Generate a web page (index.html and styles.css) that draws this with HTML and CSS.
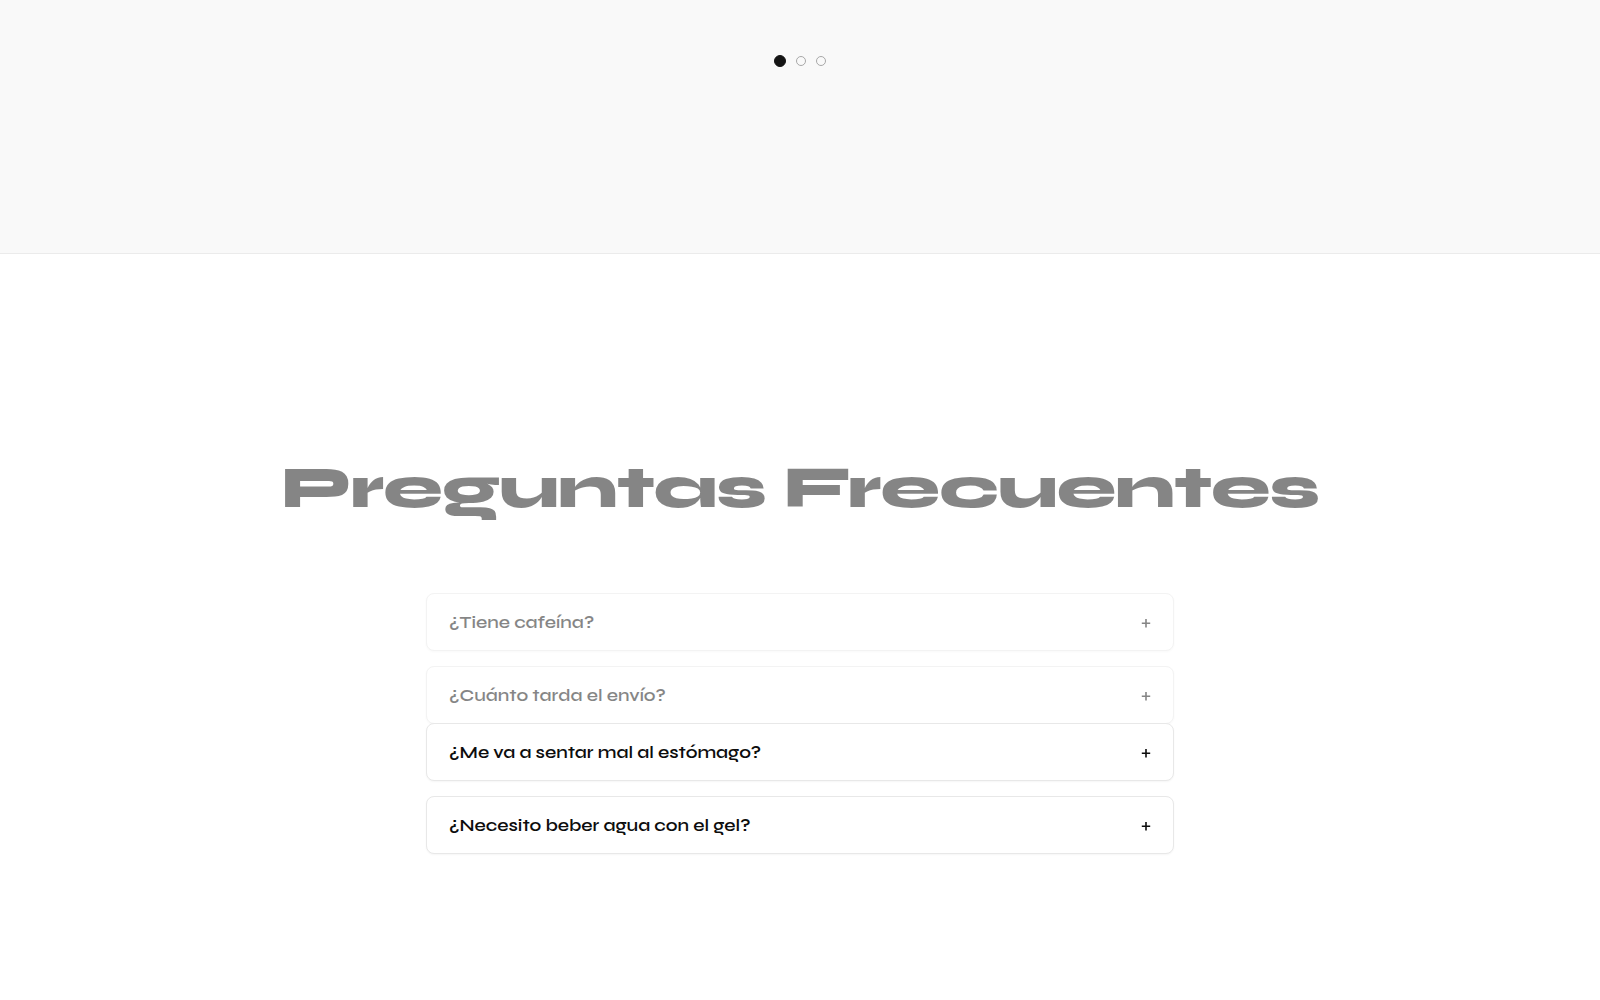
FILE: index.html
```html
<!DOCTYPE html>
<html lang="es">
<head>
<meta charset="utf-8">
<meta name="viewport" content="width=device-width, initial-scale=1">
<title>Preguntas Frecuentes</title>
<link rel="stylesheet" href="styles.css">
</head>
<body>
<section class="slider">
  <div class="dots">
    <button class="dot dot-active" type="button" aria-label="1"></button>
    <button class="dot" type="button" aria-label="2"></button>
    <button class="dot" type="button" aria-label="3"></button>
  </div>
</section>
<main class="faq">
  <h2 class="faq-title">Preguntas Frecuentes</h2>
  <div class="faq-list">
    <div class="faq-group faq-entering">
      <button class="faq-item" type="button"><span>¿Tiene cafeína?</span><svg class="plus" viewBox="0 0 10 12" aria-hidden="true"><path d="M5 3v8.5M.8 7.2h8.4"/></svg></button>
      <button class="faq-item" type="button"><span>¿Cuánto tarda el envío?</span><svg class="plus" viewBox="0 0 10 12" aria-hidden="true"><path d="M5 3v8.5M.8 7.2h8.4"/></svg></button>
    </div>
    <div class="faq-group faq-shown">
      <button class="faq-item" type="button"><span>¿Me va a sentar mal al estómago?</span><svg class="plus" viewBox="0 0 10 12" aria-hidden="true"><path d="M5 3v8.5M.8 7.2h8.4"/></svg></button>
      <button class="faq-item" type="button"><span>¿Necesito beber agua con el gel?</span><svg class="plus" viewBox="0 0 10 12" aria-hidden="true"><path d="M5 3v8.5M.8 7.2h8.4"/></svg></button>
    </div>
  </div>
</main>
</body>
</html>
```
FILE: styles.css
```css
* {
  box-sizing: border-box;
}

body {
  margin: 0;
  background: #fff;
  color: #0d0d0d;
  font-family: Syne, Inter, "Liberation Sans", sans-serif;
}

.slider {
  padding: 55px 24px 186px;
  background: #f9f9f9;
  border-bottom: 1px solid #ebebeb;
}

.dots {
  display: flex;
  justify-content: center;
  align-items: center;
  gap: 10px;
  height: 12px;
}

.dot {
  width: 10px;
  height: 10px;
  padding: 0;
  border: 1px solid #a8a8a8;
  border-radius: 50%;
  background: transparent;
}

.dot-active {
  width: 12px;
  height: 12px;
  border-color: #141414;
  background: #141414;
}

.faq {
  padding: 190px 24px 144px;
}

.faq-title {
  margin: 0 0 61px;
  font-family: Syne, "DejaVu Sans", sans-serif;
  font-size: 60px;
  font-weight: 800;
  line-height: 88px;
  letter-spacing: -1px;
  text-align: center;
  opacity: 0.5;
}

.faq-list {
  max-width: 748px;
  margin: 0 auto;
}

.faq-group {
  display: flex;
  flex-direction: column;
  gap: 15px;
}

.faq-entering .faq-item {
  opacity: 0.5;
}

.faq-shown {
  position: relative;
  margin-top: -1px;
}

.faq-item {
  display: flex;
  justify-content: space-between;
  align-items: center;
  width: 100%;
  padding: 16px 22px;
  border: 1px solid #e8e8e8;
  border-radius: 8px;
  background: #fff;
  box-shadow: 0 1px 2px rgba(0, 0, 0, 0.04);
  color: inherit;
  font-family: inherit;
  font-size: 18px;
  font-weight: 600;
  line-height: 24px;
  text-align: left;
}

.plus {
  width: 10px;
  height: 12px;
  fill: none;
  stroke: currentColor;
  stroke-width: 1.6;
}
```
